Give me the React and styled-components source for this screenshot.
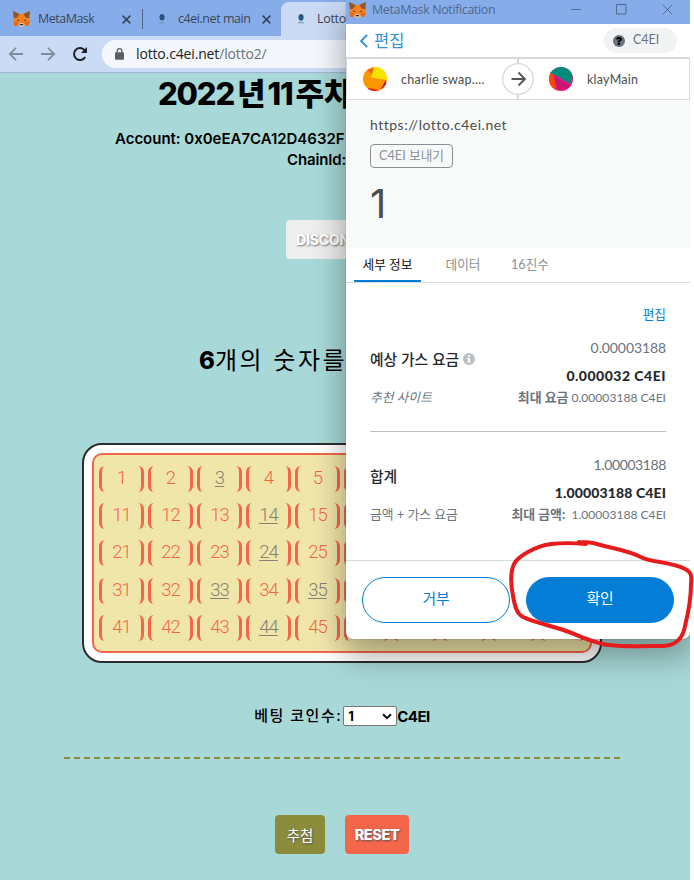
import React from "react";
import styled, { createGlobalStyle } from "styled-components";

const GlobalStyle = createGlobalStyle`
  * { box-sizing: border-box; }
  body { margin: 0; background: #fff; }
  button, select { font: inherit; }
`;

const uiFont = `"Open Sans", "Noto Sans CJK KR", sans-serif`;
const lottoFont = `Inter, "Noto Sans CJK KR", sans-serif`;
const walletFont = `Lato, "Noto Sans CJK KR", sans-serif`;

/* ---------- desktop and browser ---------- */

const Desktop = styled.div`
  position: relative;
  width: 694px;
  height: 880px;
  overflow: hidden;
`;

const Browser = styled.div`
  width: 690px;
  height: 880px;
  display: flex;
  flex-direction: column;
  background: #a8d9d8;
  overflow: hidden;
`;

const TabStrip = styled.div`
  height: 36px;
  flex: none;
  display: flex;
  background: #86ade9;
`;

const Tab = styled.div`
  width: ${(p) => p.$width}px;
  margin-top: 2px;
  padding-left: ${(p) => p.$pad}px;
  display: flex;
  align-items: center;
  border-radius: 8px 8px 0 0;
  background: ${(p) => (p.$active ? "#cbdbf5" : "transparent")};
  font: 12.5px/34px ${uiFont};
  color: #3b4657;
  white-space: nowrap;
`;

const TabTitle = styled.span`
  margin-left: ${(p) => p.$gap}px;
  width: ${(p) => p.$width}px;
  letter-spacing: ${(p) => p.$spacing}px;
`;

const TabDivider = styled.div`
  width: 1px;
  height: 20px;
  margin-top: 9px;
  background: #4d6384;
`;

const Toolbar = styled.div`
  height: 37px;
  flex: none;
  display: flex;
  align-items: center;
  background: #cbdbf5;
  border-bottom: 1px solid #a5b1cf;
  padding: 0 0 1px 8px;
`;

const NavIcons = styled.div`
  display: flex;
  gap: 16px;
  width: 94px;
`;

const AddressBar = styled.div`
  flex: 1;
  height: 28px;
  border-radius: 14px 0 0 14px;
  background: #f4f7fc;
  display: flex;
  align-items: center;
  gap: 12px;
  padding-left: 13px;
  font: 14px/28px ${uiFont};
  letter-spacing: -0.15px;
  color: #202124;
`;

const UrlPath = styled.span`
  color: #6c7178;
`;

/* ---------- lotto page ---------- */

const LottoPage = styled.main`
  width: 684px;
  flex: 1;
  display: flex;
  flex-direction: column;
  align-items: center;
  font-family: ${lottoFont};
  color: #000;
`;

const PageTitle = styled.h1`
  margin: 0;
  width: 368px;
  height: 56px;
  font-size: 31px;
  line-height: 42px;
  font-weight: 800;
  letter-spacing: -1.2px;
  white-space: nowrap;
`;

const TitleHangul = styled.span`
  margin: 0 2px 0 3px;
  letter-spacing: 0;
`;

const AccountInfo = styled.div`
  height: 91px;
  width: 454px;
  font-size: 15px;
  line-height: 20.5px;
  font-weight: 600;
  letter-spacing: -0.02px;
  white-space: nowrap;
`;

const ChainLine = styled.div`
  padding-left: 172px;
  letter-spacing: -0.15px;
`;

const LottoButton = styled.button`
  height: 39px;
  width: ${(p) => p.$width}px;
  flex: none;
  padding: 0;
  border: 0;
  border-radius: 4px;
  background: ${(p) => p.$bg};
  color: #fff;
  font-size: 14.5px;
  font-weight: ${(p) => p.$weight || 800};
  letter-spacing: ${(p) => p.$spacing || 0}px;
  text-shadow: 1px 1px 2px ${(p) => p.$shadow || "#555"};
`;

const PickHeading = styled.h2`
  margin: 82px 0 62px;
  height: 40px;
  width: 286px;
  font-size: 24px;
  line-height: 40px;
  font-weight: 400;
  letter-spacing: 2.5px;
  white-space: nowrap;
  b { font-weight: 800; letter-spacing: 0; }
`;

const Ticket = styled.section`
  width: 520px;
  height: 220px;
  flex: none;
  padding: 8px;
  border: 2px solid #2c2c2c;
  border-radius: 20px;
  background: #fff;
`;

const NumberGrid = styled.div`
  height: 200px;
  display: grid;
  grid-template-columns: repeat(10, 45px);
  grid-auto-rows: 26px;
  column-gap: 4px;
  row-gap: 11.2px;
  padding: 11px 0 0 5px;
  border: 2px solid #f4664a;
  border-radius: 10px;
  background: #f1e6aa;
`;

const NumberCell = styled.span`
  border: solid #f4664a;
  border-width: 0 3px;
  border-radius: 6px;
  font: 300 18.5px/25px Roboto, sans-serif;
  letter-spacing: -0.9px;
  text-align: center;
  color: ${(p) => (p.$picked ? "#858176" : "#f4664a")};
  text-decoration: ${(p) => (p.$picked ? "underline" : "none")};
  text-decoration-thickness: 1px;
  text-underline-offset: 2px;
`;

const BetRow = styled.div`
  margin-top: 42px;
  height: 22px;
  display: flex;
  align-items: center;
  font-size: 15px;
  font-weight: 700;
`;

const BetLabel = styled.label`
  width: 89px;
  padding-bottom: 3px;
  font-weight: 500;
  letter-spacing: 1.5px;
  white-space: nowrap;
`;

const BetSelect = styled.div`
  width: 54px;
  height: 20px;
  padding: 0 4px;
  display: flex;
  align-items: center;
  justify-content: space-between;
  border: 1px solid #767676;
  border-radius: 2px;
  background: #fff;
  font-size: 13px;
`;

const BetUnit = styled.span`
  letter-spacing: -0.5px;
`;

const Divider = styled.hr`
  width: 556px;
  height: 2px;
  margin: 30px 0 56px;
  border: 0;
  background: repeating-linear-gradient(90deg, #8b8c3a 0 6px, transparent 6px 10px);
`;

const ActionRow = styled.div`
  display: flex;
  gap: 20px;
`;

/* ---------- wallet window ---------- */

const WalletWindow = styled.section`
  position: absolute;
  left: 346px;
  top: 0;
  width: 344px;
  height: 639px;
  display: flex;
  flex-direction: column;
  background: #fff;
  border-radius: 0 0 7px 7px;
  font-family: ${walletFont};
  box-shadow: 0 0 1px rgba(0, 0, 0, 0.6), 0 15px 32px 2px rgba(0, 0, 0, 0.33);
  clip-path: inset(0 0 -70px -50px);
`;

const WindowBar = styled.header`
  height: 24px;
  flex: none;
  padding: 0 17px 5px 3px;
  display: flex;
  align-items: center;
  background: #86ade9;
  color: #52678b;
  font: 12.5px/18px ${uiFont};
  letter-spacing: -0.38px;
`;

const WindowTitle = styled.span`
  flex: 1;
  padding-left: 6px;
`;

const WindowControls = styled.div`
  display: flex;
  gap: 35px;
`;

const WalletHeader = styled.div`
  height: 33px;
  flex: none;
  display: flex;
  align-items: center;
  justify-content: space-between;
  padding: 0 13px 0 14px;
`;

const BackLink = styled.a`
  display: flex;
  align-items: center;
  gap: 6px;
  color: #2f93df;
  font-size: 16.5px;
  line-height: 30px;
`;

const NetworkBadge = styled.span`
  width: 73px;
  height: 25px;
  display: flex;
  align-items: center;
  gap: 8px;
  padding: 0 0 2px 9px;
  border-radius: 13px;
  background: #f2f3f4;
  color: #6a737d;
  font-size: 12.5px;
`;

const NetworkMark = styled.b`
  width: 12px;
  height: 12px;
  margin-top: 2px;
  border-radius: 50%;
  background: #6a737d;
  color: #000;
  text-align: center;
  font: 900 11px/12px Inter, sans-serif;
`;

const Transfer = styled.div`
  height: 43px;
  flex: none;
  display: grid;
  grid-template-columns: 155px 32px 1fr;
  align-items: center;
  border: solid #d6d9dc;
  border-width: 2px 1px 1px;
  color: #4d4d4d;
  font-size: 12.5px;
  letter-spacing: 0.25px;
`;

const Party = styled.div`
  display: flex;
  align-items: center;
  gap: 14px;
  padding-left: ${(p) => p.$pad}px;
  white-space: nowrap;
`;

const TransferArrow = styled.div`
  height: 40px;
  display: flex;
  align-items: center;
  background: linear-gradient(#d6d9dc, #d6d9dc) center / 2px 100% no-repeat;
  svg { display: block; }
`;

const Summary = styled.div`
  height: 148px;
  flex: none;
  padding: 15px 24px;
  background: #f8faf9;
  color: #4d4d4d;
`;

const Origin = styled.div`
  height: 29px;
  font-size: 14px;
  line-height: 20px;
  letter-spacing: 0.5px;
`;

const ActionTag = styled.span`
  display: block;
  width: 83px;
  height: 24px;
  border: 1px solid #8b8f92;
  border-radius: 4px;
  color: #8b9197;
  font-size: 12.7px;
  line-height: 21px;
  text-align: center;
`;

const Amount = styled.div`
  margin-top: 13px;
  font-size: 40px;
  line-height: 46px;
  font-family: Inter, sans-serif;
`;

const WalletTabs = styled.nav`
  height: 35px;
  flex: none;
  display: flex;
  padding-left: 8px;
  border-bottom: 1px solid #d6d9dc;
`;

const WalletTab = styled.a`
  width: ${(p) => p.$width}px;
  height: 34px;
  margin-right: 8px;
  text-align: center;
  font-size: 12.7px;
  line-height: 33px;
  color: ${(p) => (p.$active ? "#111" : "#8b9197")};
  border-bottom: ${(p) => (p.$active ? "2px solid #037dd6" : "0")};
`;

const Details = styled.div`
  height: 277px;
  flex: none;
  padding: 20px 24px 0;
`;

const EditLink = styled.a`
  display: block;
  height: 32px;
  text-align: right;
  color: #037dd6;
  font-size: 12.7px;
  line-height: 23px;
`;

const FeeBlock = styled.div`
  height: ${(p) => p.$height}px;
  border-bottom: ${(p) => (p.$ruled ? "1px solid #bbc0c5" : "0")};
  margin-bottom: ${(p) => (p.$ruled ? 20 : 0)}px;
  display: grid;
  grid-template-columns: auto auto;
  justify-content: space-between;
  align-content: start;
`;

const FeeLabel = styled.div`
  grid-row: span 2;
  height: 48px;
  display: flex;
  align-items: center;
  gap: 4px;
  color: #24292e;
  font-size: 14.8px;
  font-weight: 500;
  line-height: 24px;
`;

const FiatValue = styled.div`
  height: 27px;
  text-align: right;
  color: #6a737d;
  font-size: 14px;
  line-height: 26px;
  letter-spacing: ${(p) => p.$spacing}px;
`;

const CoinValue = styled.div`
  height: 28px;
  text-align: right;
  color: #24292e;
  font-size: 14px;
  font-weight: 900;
  line-height: 28px;
  letter-spacing: ${(p) => p.$spacing}px;
`;

const FeeNote = styled.div`
  height: 18px;
  color: #6a737d;
  font-size: ${(p) => (p.$right ? 12.1 : 12.8)}px;
  line-height: 15px;
  font-style: ${(p) => (p.$slanted ? "italic" : "normal")};
  text-align: ${(p) => (p.$right ? "right" : "left")};
  b { font-size: 12.9px; font-weight: 700; }
`;

const WalletFooter = styled.footer`
  height: 79px;
  display: flex;
  justify-content: space-between;
  padding: 16px;
  border-top: 1px solid #d6d9dc;
`;

const PillButton = styled.button`
  width: 148px;
  height: 46px;
  padding: 0 0 5px;
  border-radius: 23px;
  border: 1px solid #037dd6;
  background: ${(p) => (p.$primary ? "#037dd6" : "#fff")};
  color: ${(p) => (p.$primary ? "#fff" : "#037dd6")};
  font-size: 14.8px;
`;

const Marker = styled.svg`
  position: absolute;
  left: 500px;
  top: 530px;
`;

/* ---------- drawings ---------- */

const Fox = () => (
  <svg width="17" height="16" viewBox="0 0 17 16">
    <path d="M0 0l6.6 3h3.8L17 0l-.8 5.4.5 5-1.3 4.6-3.6-.8L10 16H7l-1.800-1.800L1.600 15 .3 10.400l.5-5z" fill="#f58220" />
    <path d="M0 0l6.600 3L4.500 6.500.8 7.200zM17 0l-6.600 3 2.100 3.500 3.700.7z" fill="#94552c" />
    <path d="M1.600 15l3.600-.8L5 11l-4.700-.6zM15.400 15l-3.600-.8.2-3.200 4.700-.6z" fill="#e9661d" />
    <path d="M5 14.200L6.800 12h3.400l1.800 2.200L10 16H7z" fill="#d9c1b2" />
    <path d="M4.300 8.400l2.500 1.100-2.200.5zM12.700 8.400l-2.500 1.100 2.200.5zM7 13h3l.3 1.300H6.700z" fill="#26333f" />
  </svg>
);

const Cross = ({ size = 9, color = "#33445c", width = 1.7 }) => (
  <svg width={size} height={size} viewBox="0 0 10 10">
    <path d="M.7.7l8.600 8.600M9.300.7L.7 9.300" stroke={color} strokeWidth={width} />
  </svg>
);

const SiteIcon = () => (
  <svg width="8" height="10" viewBox="0 0 8 10">
    <path d="M4 0C1.800.2 1.300 2 1.500 4l.8 2h3.600l.7-2C6.800 2 6.200.2 4 0z" fill="#29547f" />
    <path d="M2.500 6h3v1.300h-3zM1 8.200h6v1H1z" fill="#6f94b8" />
  </svg>
);

const NavArrow = ({ forward }) => (
  <svg width="16" height="16" viewBox="0 0 16 16" fill="none" stroke="#828c9f" strokeWidth="1.8">
    <path d={forward ? "M1 8h13M8 1.800L14.200 8 8 14.200" : "M15 8H2M8 1.800L1.800 8 8 14.200"} />
  </svg>
);

const Reload = () => (
  <svg width="16" height="16" viewBox="0 0 16 16">
    <path d="M13.200 11a6 6 0 1 1-.3-6.400" fill="none" stroke="#202124" strokeWidth="2" />
    <path d="M15 1v6H9z" fill="#202124" />
  </svg>
);

const Lock = () => (
  <svg width="9" height="12" viewBox="0 0 9 12">
    <rect y="4.300" width="9" height="7.500" rx="1" fill="#5b6067" />
    <path d="M2.200 5V3a2.300 2.300 0 0 1 4.600 0v2" fill="none" stroke="#5b6067" strokeWidth="1.300" />
  </svg>
);

const SenderAvatar = () => (
  <svg width="24" height="24" viewBox="0 0 24 24">
    <clipPath id="sender"><circle cx="12" cy="12" r="12" /></clipPath>
    <g clipPath="url(#sender)">
      <rect width="24" height="24" fill="#fb9500" />
      <path d="M4 3l10-3-5 7z" fill="#fb5c08" />
      <path d="M11 0h13v13L8 10.500z" fill="#f6e500" />
      <path d="M22.500 13L17 24h7z" fill="#cf1238" />
      <path d="M5 21l7 1 6 2H5z" fill="#e02b18" />
    </g>
  </svg>
);

const RecipientAvatar = () => (
  <svg width="24" height="24" viewBox="0 0 24 24">
    <clipPath id="recipient"><circle cx="12" cy="12" r="12" /></clipPath>
    <g clipPath="url(#recipient)">
      <rect width="24" height="24" fill="#f51488" />
      <path d="M0 7l4-1 4 18H0z" fill="#fb4904" />
      <path d="M5 9l16 9-1 3-12 2z" fill="#c9176f" />
      <path d="M0 0h24v9l-2.500 8L4 7H0z" fill="#038b7b" />
    </g>
  </svg>
);

const CircledArrow = () => (
  <svg width="32" height="32" viewBox="0 0 32 32" fill="none">
    <circle cx="16" cy="16" r="15.300" fill="#fff" stroke="#d6d9dc" strokeWidth="1.300" />
    <path d="M9.500 16h13M16.500 9.500L23 16l-6.500 6.500" stroke="#555" strokeWidth="1.800" />
  </svg>
);

const Info = () => (
  <svg width="12" height="12" viewBox="0 0 12 12">
    <circle cx="6" cy="6" r="6" fill="#bbc0c5" />
    <path d="M5 2.300h2V4H5zM4.500 5H7v3.500h.6v1H4.400v-1H5V6h-.5z" fill="#fff" />
  </svg>
);

/* ---------- page ---------- */

const picked = [3, 14, 24, 33, 35, 44];
const numbers = Array.from({ length: 50 }, (_, i) => i + 1);

export default function App() {
  return (
    <Desktop>
      <GlobalStyle />
      <Browser>
        <TabStrip>
          <Tab $width={142} $pad={13}>
            <Fox />
            <TabTitle $gap={8} $width={84} $spacing={-0.5}>MetaMask</TabTitle>
            <Cross />
          </Tab>
          <TabDivider />
          <Tab $width={138} $pad={15}>
            <SiteIcon />
            <TabTitle $gap={12} $width={84} $spacing={-0.45}>c4ei.net main</TabTitle>
            <Cross />
          </Tab>
          <Tab $width={220} $pad={16} $active>
            <SiteIcon />
            <TabTitle $gap={12} $width={80} $spacing={-0.3}>Lotto</TabTitle>
          </Tab>
        </TabStrip>
        <Toolbar>
          <NavIcons>
            <NavArrow />
            <NavArrow forward />
            <Reload />
          </NavIcons>
          <AddressBar>
            <Lock />
            <span>lotto.c4ei.net<UrlPath>/lotto2/</UrlPath></span>
          </AddressBar>
        </Toolbar>

        <LottoPage>
          <PageTitle>
            2022<TitleHangul>년</TitleHangul>11<TitleHangul>주차</TitleHangul>
          </PageTitle>
          <AccountInfo>
            <div>Account: 0x0eEA7CA12D4632F</div>
            <ChainLine>ChainId:</ChainLine>
          </AccountInfo>
          <LottoButton $width={112} $bg="#eeeeee" $spacing={-0.6} $shadow="#777">DISCONNECT</LottoButton>
          <PickHeading><b>6</b>개의 숫자를</PickHeading>
          <Ticket>
            <NumberGrid>
              {numbers.map((n) => (
                <NumberCell key={n} $picked={picked.includes(n)}>{n <= 45 ? n : ""}</NumberCell>
              ))}
            </NumberGrid>
          </Ticket>
          <BetRow>
            <BetLabel>베팅 코인수:</BetLabel>
            <BetSelect>
              1
              <svg width="10" height="7" viewBox="0 0 10 7">
                <path d="M1 1.200l4 4 4-4" fill="none" stroke="#111" strokeWidth="2" />
              </svg>
            </BetSelect>
            <BetUnit>C4EI</BetUnit>
          </BetRow>
          <Divider />
          <ActionRow>
            <LottoButton $width={50} $bg="#8b8c3a" $weight={400}>추첨</LottoButton>
            <LottoButton $width={64} $bg="#f4664a" $spacing={-0.4}>RESET</LottoButton>
          </ActionRow>
        </LottoPage>
      </Browser>

      <WalletWindow>
        <WindowBar>
          <Fox />
          <WindowTitle>MetaMask Notification</WindowTitle>
          <WindowControls>
            <svg width="10" height="11" viewBox="0 0 10 11"><path d="M0 5.500h10" stroke="#52678b" /></svg>
            <svg width="11" height="11" viewBox="0 0 11 11"><path d="M.5.5h9.500v9.500H.5z" fill="none" stroke="#52678b" /></svg>
            <Cross size={11} color="#52678b" width={0.9} />
          </WindowControls>
        </WindowBar>
        <WalletHeader>
          <BackLink>
            <svg width="8" height="14" viewBox="0 0 8 14"><path d="M7.200.8L1.200 7l6 6.200" fill="none" stroke="#2f93df" strokeWidth="1.900" /></svg>
            편집
          </BackLink>
          <NetworkBadge><NetworkMark>?</NetworkMark>C4EI</NetworkBadge>
        </WalletHeader>
        <Transfer>
          <Party $pad={16}><SenderAvatar />charlie swap....</Party>
          <TransferArrow><CircledArrow /></TransferArrow>
          <Party $pad={15}><RecipientAvatar />klayMain</Party>
        </Transfer>
        <Summary>
          <Origin>https://lotto.c4ei.net</Origin>
          <ActionTag>C4EI 보내기</ActionTag>
          <Amount>1</Amount>
        </Summary>
        <WalletTabs>
          <WalletTab $width={67} $active>세부 정보</WalletTab>
          <WalletTab $width={68}>데이터</WalletTab>
          <WalletTab $width={50}>16진수</WalletTab>
        </WalletTabs>
        <Details>
          <EditLink>편집</EditLink>
          <FeeBlock $height={97} $ruled>
            <FeeLabel>예상 가스 요금 <Info /></FeeLabel>
            <FiatValue $spacing={-0.1}>0.00003188</FiatValue>
            <CoinValue $spacing={0.5}>0.000032 C4EI</CoinValue>
            <FeeNote $slanted>추천 사이트</FeeNote>
            <FeeNote $right><b>최대 요금</b> 0.00003188 C4EI</FeeNote>
          </FeeBlock>
          <FeeBlock $height={90}>
            <FeeLabel>합계</FeeLabel>
            <FiatValue $spacing={-0.4}>1.00003188</FiatValue>
            <CoinValue $spacing={0.12}>1.00003188 C4EI</CoinValue>
            <FeeNote>금액 + 가스 요금</FeeNote>
            <FeeNote $right><b>최대 금액:</b>&nbsp; 1.00003188 C4EI</FeeNote>
          </FeeBlock>
        </Details>
        <WalletFooter>
          <PillButton>거부</PillButton>
          <PillButton $primary>확인</PillButton>
        </WalletFooter>
      </WalletWindow>

      <Marker width="194" height="120" viewBox="0 0 194 120">
        <path
          d="M79 12L86 14C75 13 60 13 51 14C36 16 18 26 14 34C10 43 11 56 13 66C15 77 17 84 23 87C33 92 52 96 66 101C80 106 96 114 109 115C125 117 147 116 164 116C176 115 183 108 185 96C188 84 191 70 191 54C192 45 191 42 185 39C171 32 151 32 143 28C128 20 110 18 97 14C91 12 86 12 79 12"
          fill="none"
          stroke="#e61c1c"
          strokeWidth="4"
          strokeLinecap="round"
          strokeLinejoin="round"
        />
      </Marker>
    </Desktop>
  );
}
